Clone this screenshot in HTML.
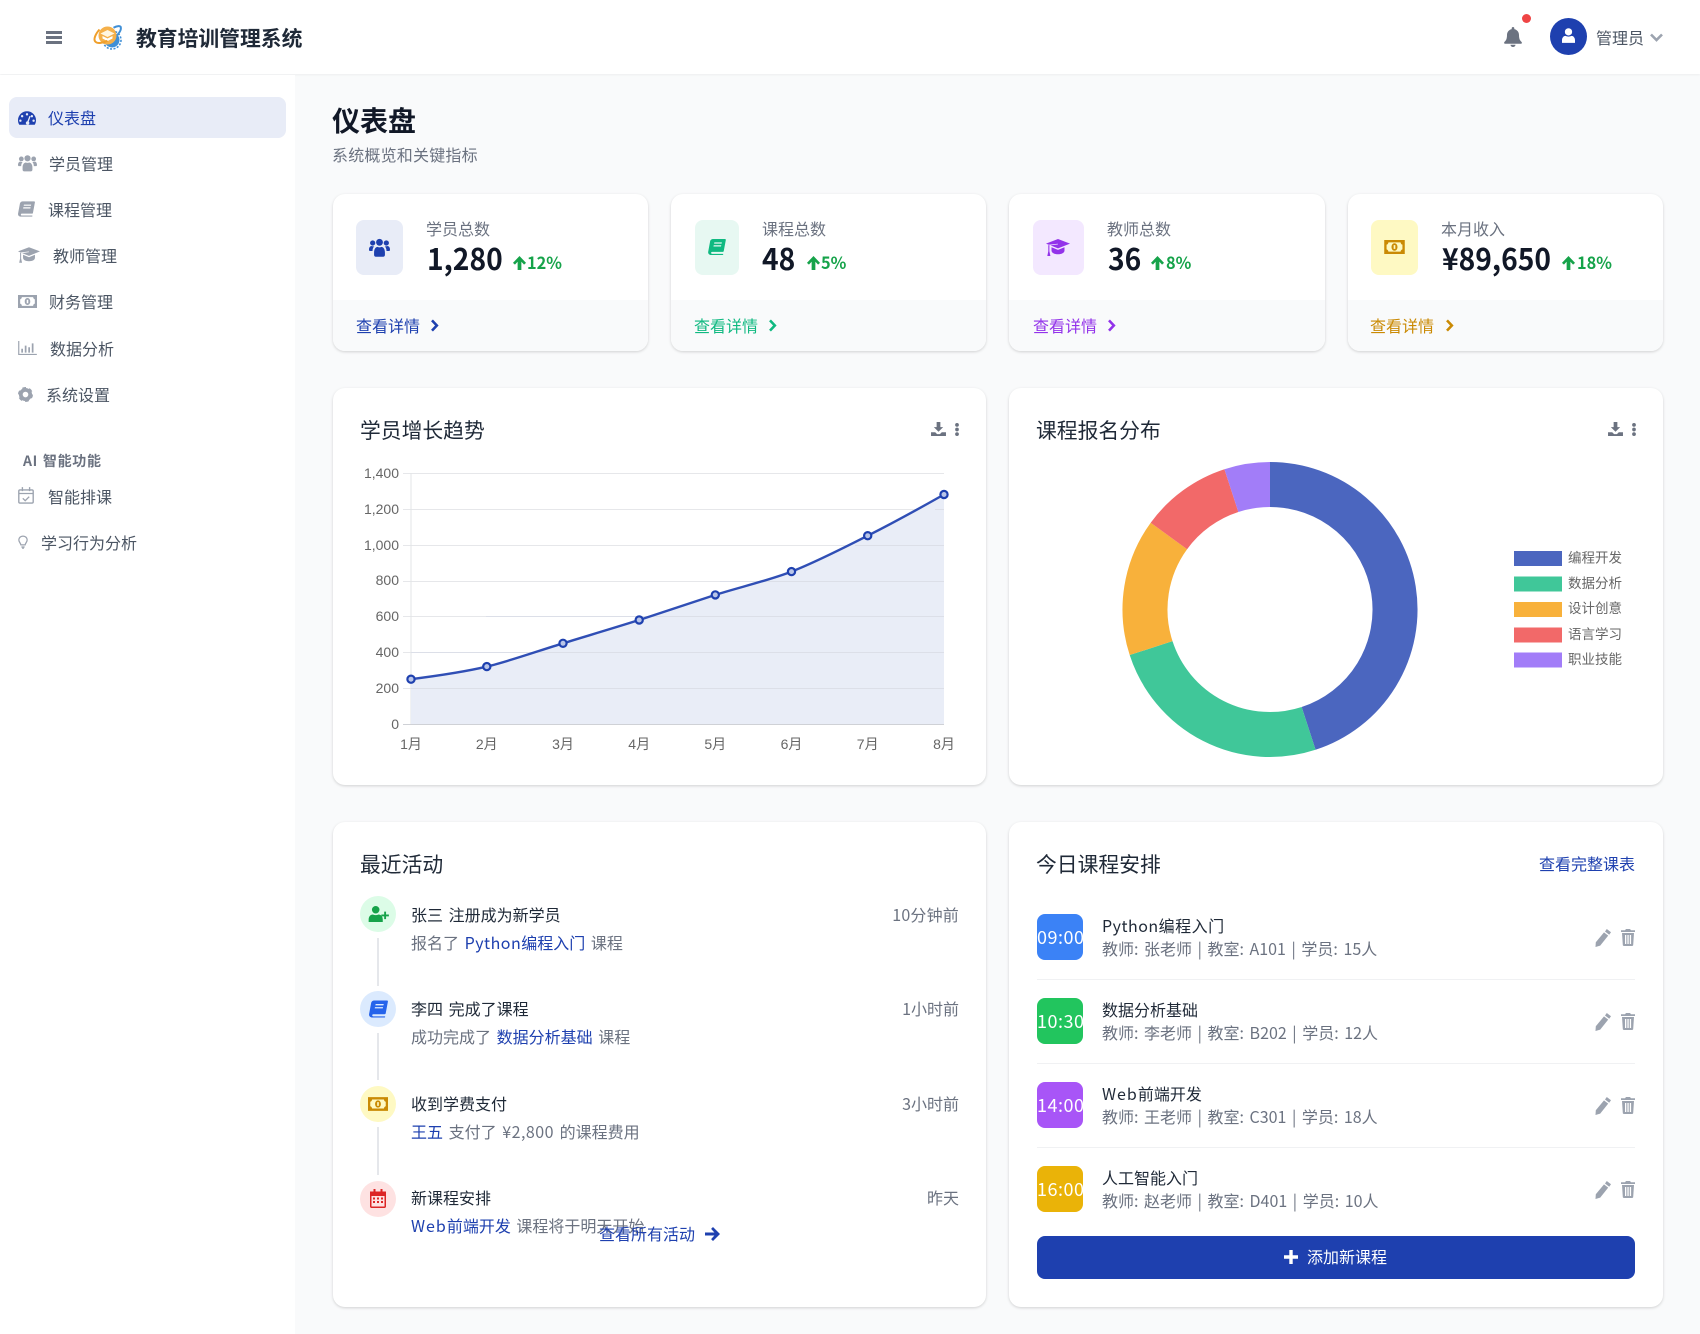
<!DOCTYPE html>
<html lang="zh-CN"><head><meta charset="utf-8"><title>教育培训管理系统</title>
<style>
html,body{margin:0;padding:0;background:#f9fafb}
#p{position:relative;width:1700px;height:1334px;overflow:hidden;background:#f9fafb;font-family:"Noto Sans CJK SC","Liberation Sans",sans-serif;font-size:16px;color:#1f2937;filter:blur(.35px)}
.a{position:absolute}
.t{position:absolute;line-height:24px;white-space:nowrap}
.r{text-align:right}
.w{word-spacing:2px}
.l{letter-spacing:.5px}
.card{position:absolute;background:#fff;border-radius:12px;box-shadow:0 1px 3px rgba(0,0,0,.12),0 1px 2px rgba(0,0,0,.05);overflow:hidden}
.foot{position:absolute;left:0;right:0;top:106px;bottom:0;background:#f9fafb}
.n{color:#4b5563;left:0}
.g{color:#6b7280}
.b{color:#1e40af}
.h{font-size:20.8px;color:#1f2937;line-height:30px;position:absolute;white-space:nowrap}
.num{position:absolute;font-size:30px;font-weight:700;color:#111827;line-height:40px;white-space:nowrap;transform:scaleX(.94);transform-origin:left center}
.up{position:absolute;font-size:17px;font-weight:700;color:#16a34a;line-height:24px;white-space:nowrap;transform:scaleX(.96);transform-origin:left center}
.ic{position:absolute;border-radius:8px}
.tb{position:absolute;left:1037px;width:46px;height:46px;border-radius:8px;color:#fff;font-size:18px;line-height:46px;text-align:center;white-space:nowrap;overflow:hidden;letter-spacing:.5px}
.cx{position:absolute;left:360px;width:36px;height:36px;border-radius:50%}
.ln{position:absolute;left:377px;width:2px;background:#e5e7eb}
.dv{position:absolute;left:1037px;width:598px;height:1px;background:#f0f1f3}
svg{position:absolute;overflow:visible}
</style></head><body><div id="p">
<svg width="0" height="0" style="position:absolute"><defs>
<symbol id="gauge" viewBox="0 0 24 20"><path fill="currentColor" fill-rule="evenodd" d="M12 1A12 12 0 0 0 0 13c0 2.300.6 4.300 1.700 6h20.600c1.100-1.700 1.700-3.700 1.700-6A12 12 0 0 0 12 1zM12 3.500a1.600 1.600 0 1 1 0 3.200 1.600 1.600 0 0 1 0-3.200zM5.500 6a1.600 1.600 0 1 1 0 3.200 1.600 1.600 0 0 1 0-3.200zM18.500 6a1.600 1.600 0 1 1 0 3.200 1.600 1.600 0 0 1 0-3.200zM3.200 12a1.600 1.600 0 1 1 0 3.200 1.600 1.600 0 0 1 0-3.200zM20.800 12a1.600 1.600 0 1 1 0 3.200 1.600 1.600 0 0 1 0-3.200zM15.300 7.200l1.500.6-2.500 7a2.400 2.400 0 1 1-1.800-.5z"/></symbol>
<symbol id="users" viewBox="0 0 24 21"><g fill="currentColor"><circle cx="12" cy="4.600" r="3.900"/><circle cx="4.200" cy="5.300" r="3"/><circle cx="19.800" cy="5.300" r="3"/><path d="M5.800 16c0-4 2.200-6.200 4-6.200 1.400.7 3 .7 4.400 0 1.800 0 4 2.200 4 6.200v3c0 1-.8 2-2 2H7.800c-1.200 0-2-1-2-2z"/><path d="M0 13c0-2.500 1.300-4.200 3-4.200 1 .5 2 .6 3 .3-1.200 1.200-2 3-2 5.400H1.500C.6 14.500 0 14 0 13zM24 13c0-2.500-1.300-4.200-3-4.200-1 .5-2 .6-3 .3 1.200 1.200 2 3 2 5.400h2.500c.9 0 1.500-.5 1.500-1.500z"/></g></symbol>
<symbol id="book" viewBox="0 0 20 18"><path fill="currentColor" fill-rule="evenodd" d="M5.500 0H19c.8 0 1 .6.900 1.200L17.600 13.500c-.1.700-.6 1-1.200 1H4.500c-1.500 0-1.500 2.200 0 2.200h11.900c.5 0 .7.300.6.700-.1.400-.4.600-.8.600H3.500C1.300 18-.3 16.500.1 14.300L2.300 2.400C2.600 1 4 0 5.500 0zM7 3.800l-.3 1.400h8.500l.3-1.400zM6.300 7l-.3 1.400h8.500l.3-1.400z"/></symbol>
<symbol id="cap" viewBox="0 0 24 17"><path fill="currentColor" d="M12 0 24 4.600 12 9.400 4.500 6.400 12 5.400 11.800 4.700 2.800 5.800 0 4.600zM5.500 8.200l6.500 2.700 6.500-2.700v3.300c0 2.400-3 3.800-6.500 3.800s-6.500-1.400-6.500-3.800zM2.300 6.200l1.100-.2v6.300l1 4.700H1.300l1-4.700z"/></symbol>
<symbol id="money" viewBox="0 0 22 15"><path fill="currentColor" fill-rule="evenodd" d="M0 0h22v15H0zM4.500 2.500C4.300 4 3.500 4.800 2.500 5v5c1 .2 1.800 1 2 2.500h13c.2-1.500 1-2.300 2-2.500V5c-1-.2-1.800-1-2-2.500zM11 3.500c1.900 0 3.200 1.800 3.200 4s-1.300 4-3.200 4-3.200-1.800-3.200-4 1.300-4 3.200-4zM10.100 5.500v4h1.800v-4z"/></symbol>
<symbol id="chart" viewBox="0 0 24 18"><path fill="currentColor" d="M0 0h1.500v16.500H24V18H0zM4 10h2.200v5H4zM8.500 6h2.200v9H8.500zM13 8h2.200v7H13zM17.500 3h2.200v12h-2.200z"/></symbol>
<symbol id="cog" viewBox="0 0 24 24"><circle cx="12" cy="12" r="7.500" fill="none" stroke="currentColor" stroke-width="6"/><circle cx="12" cy="12" r="10.300" fill="none" stroke="currentColor" stroke-width="3.400" stroke-dasharray="5.800 5"/></symbol>
<symbol id="calc" viewBox="0 0 20 21"><g fill="none" stroke="currentColor" stroke-width="1.700"><rect x="1" y="3.500" width="18" height="16.500" rx="1.500"/><path d="M1 8h18M5.500 0v5M14.500 0v5M6 14l3 3 5-5"/></g></symbol>
<symbol id="bulb" viewBox="0 0 12 16"><g fill="none" stroke="currentColor" stroke-width="1.500"><path d="M6 1C3 1 1 3 1 5.500c0 2.500 2 3.500 2.500 6h5C9 9 11 8 11 5.500 11 3 9 1 6 1z"/><path d="M4 14h4M5 15.500h2"/></g></symbol>
<symbol id="bell" viewBox="0 0 18 20"><path fill="currentColor" d="M9 0c.8 0 1.300.6 1.300 1.300v.8C13 2.700 15 5 15 8c0 4.500 1.300 5.700 2.600 7 .6.700.2 1.800-.8 1.800H1.200c-1 0-1.400-1.100-.8-1.800C1.700 13.700 3 12.500 3 8c0-3 2-5.300 4.700-5.900v-.8C7.700.6 8.200 0 9 0zM6.500 17.800h5A2.500 2.200 0 0 1 9 20a2.500 2.200 0 0 1-2.500-2.200z"/></symbol>
<symbol id="dl" viewBox="0 0 16 15"><path fill="currentColor" d="M6 0h4v5.500h3L8 10.500 3 5.500h3zM0 11h4.500L6.500 13h3l2-2H16v4H0z"/></symbol>
<symbol id="dots" viewBox="0 0 4 14"><g fill="currentColor"><circle cx="2" cy="2" r="2"/><circle cx="2" cy="7" r="2"/><circle cx="2" cy="12" r="2"/></g></symbol>
<symbol id="up" viewBox="0 0 14 15"><path fill="currentColor" d="M7 0l7 7.400-2.100 1.900L9 6.200V15H5V6.200L2.100 9.300 0 7.400z"/></symbol>
<symbol id="chev" viewBox="0 0 9 14"><path fill="none" stroke="currentColor" stroke-width="2.800" d="M1.800 1.500 7 7l-5.200 5.500"/></symbol>
<symbol id="pen" viewBox="0 0 16 18"><path fill="currentColor" d="M11.800 0l4.200 3.200-1.800 2.500-4.200-3.200zM9 3.400l4.200 3.200-8 10L.5 18l.3-4.700z"/></symbol>
<symbol id="trash" viewBox="0 0 14 17"><path fill="currentColor" fill-rule="evenodd" d="M5 0h4l1 1.200h4V3H0V1.200h4zM1 4h12l-.8 12c0 .6-.6 1-1.200 1H3c-.6 0-1.200-.4-1.200-1zM4 6v9h1.300V6zM6.400 6v9h1.300V6zM8.800 6v9h1.300V6z"/></symbol>
<symbol id="plus" viewBox="0 0 14 14"><path fill="currentColor" d="M5.300 0h3.400v5.300H14v3.400H8.700V14H5.300V8.700H0V5.300h5.300z"/></symbol>
<symbol id="userp" viewBox="0 0 22 17"><g fill="currentColor"><circle cx="7.500" cy="4" r="4"/><path d="M0 17v-2.500C0 11 2 9 4.500 9c2 .9 4 .9 6 0 2.500 0 4.500 2 4.500 5.500V17z"/><path d="M16.500 6h2v3h3v2h-3v3h-2v-3h-3V9h3z"/></g></symbol>
<symbol id="cal" viewBox="0 0 16 19"><path fill="currentColor" fill-rule="evenodd" d="M3.500 0h2v2.500h5V0h2v2.500H16v15c0 .8-.7 1.500-1.500 1.500h-13C.7 19 0 18.300 0 17.500v-15h3.500zM1.500 7v10.500h13V7zM3 8.500h2v2H3zM7 8.500h2v2H7zM11 8.500h2v2h-2zM3 12h2v2H3zM7 12h2v2H7zM11 12h2v2h-2z"/></symbol>
</defs></svg>

<!-- header -->
<div class="a" style="left:0;top:0;width:1700px;height:74px;background:#fff;box-shadow:0 1px 2px rgba(0,0,0,.05)"></div>
<div class="a" style="left:46px;top:31px;width:16px;height:3px;background:#6b7280"></div>
<div class="a" style="left:46px;top:36px;width:16px;height:3px;background:#6b7280"></div>
<div class="a" style="left:46px;top:41px;width:16px;height:3px;background:#6b7280"></div>
<svg style="left:94px;top:25px;width:28px;height:24px" viewBox="0 0 28 24">
<circle cx="18" cy="15" r="7.500" fill="#3f8fd6"/>
<circle cx="18" cy="15" r="9" fill="none" stroke="#3f8fd6" stroke-width="1.600" stroke-dasharray="2 1.500"/>
<circle cx="13.500" cy="10.500" r="9" fill="#f5b04a"/>
<path d="M13.500 5l7 3.500-7 3.500-7-3.500z" fill="#fff6e2"/><path d="M8.500 11l5 2.500 5-2.500v2.500l-5 2.600-5-2.600z" fill="#fff"/>
<path d="M5.500 4.500C1.500 9-1 14.500 1.500 16.800c2.300 2.100 7.500 1.200 12-1" fill="none" stroke="#ef9f2b" stroke-width="2"/>
<path d="M19.500 2.800c3.500-2 6.800-2.300 7.300-.6.500 2-1 5-3.500 7.800" fill="none" stroke="#3f8fd6" stroke-width="2"/>
</svg>
<div class="t" style="left:136px;top:22px;font-size:20.800px;font-weight:700;line-height:30px;color:#1f2937">教育培训管理系统</div>
<svg style="left:1504px;top:27px;width:18px;height:20px;color:#6b7280"><use href="#bell"/></svg>
<div class="a" style="left:1522px;top:14px;width:9px;height:9px;border-radius:50%;background:#ef4444"></div>
<div class="a" style="left:1550px;top:18px;width:37px;height:37px;border-radius:50%;background:#1e40af"></div>
<svg style="left:1562px;top:27px;width:13px;height:17px" viewBox="0 0 15 17"><circle cx="7.500" cy="4.300" r="4.200" fill="#fff"/><path d="M0 17v-3c0-3 2-5 4-5 2.200 1 4.800 1 7 0 2 0 4 2 4 5v3z" fill="#fff"/></svg>
<div class="t" style="left:1596px;top:24.500px;color:#4b5563">管理员</div>
<svg style="left:1650px;top:33px;width:13px;height:9px;color:#9ca3af" viewBox="0 0 13 9"><path fill="none" stroke="currentColor" stroke-width="2.600" d="M1 1.500l5.500 5.500L12 1.500"/></svg>

<!-- sidebar -->
<div class="a" style="left:0;top:75px;width:295px;height:1259px;background:#fff"></div>
<div class="a" style="left:9px;top:97px;width:277px;height:41px;border-radius:8px;background:#e8ecf7"></div>
<svg style="left:18px;top:110px;width:18px;height:16px;color:#1e40af"><use href="#gauge"/></svg>
<div class="t b" style="left:48px;top:105px">仪表盘</div>
<svg style="left:18px;top:154px;width:19px;height:18px;color:#9ca3af"><use href="#users"/></svg>
<div class="t n" style="left:49px;top:151px">学员管理</div>
<svg style="left:18px;top:201px;width:17px;height:16px;color:#9ca3af"><use href="#book"/></svg>
<div class="t n" style="left:48px;top:197px">课程管理</div>
<svg style="left:18px;top:247px;width:22px;height:16px;color:#9ca3af"><use href="#cap"/></svg>
<div class="t n" style="left:53px;top:243px">教师管理</div>
<svg style="left:18px;top:295px;width:19px;height:13px;color:#9ca3af"><use href="#money"/></svg>
<div class="t n" style="left:49px;top:289px">财务管理</div>
<svg style="left:18px;top:341px;width:19px;height:14px;color:#9ca3af"><use href="#chart"/></svg>
<div class="t n" style="left:50px;top:336px">数据分析</div>
<svg style="left:18px;top:387px;width:15px;height:15px;color:#9ca3af"><use href="#cog"/></svg>
<div class="t n" style="left:46px;top:382px">系统设置</div>
<div class="t" style="left:23px;top:449px;font-size:14px;font-weight:700;color:#6b7280;line-height:24px;letter-spacing:.7px;word-spacing:1px">AI 智能功能</div>
<svg style="left:18px;top:487px;width:16px;height:17px;color:#9ca3af"><use href="#calc"/></svg>
<div class="t n" style="left:48px;top:484px">智能排课</div>
<svg style="left:18px;top:535px;width:10px;height:14px;color:#9ca3af"><use href="#bulb"/></svg>
<div class="t n" style="left:41px;top:530px">学习行为分析</div>

<!-- page title -->
<div class="t" style="left:332px;top:100px;font-size:28px;font-weight:700;line-height:40px;color:#111827">仪表盘</div>
<div class="t g" style="left:332px;top:142px;letter-spacing:.2px">系统概览和关键指标</div>

<!-- stat cards -->
<div class="card" style="left:333px;top:194px;width:315px;height:157px"><div class="foot"></div></div>
<div class="card" style="left:671px;top:194px;width:315px;height:157px"><div class="foot"></div></div>
<div class="card" style="left:1009px;top:194px;width:316px;height:157px"><div class="foot"></div></div>
<div class="card" style="left:1348px;top:194px;width:315px;height:157px"><div class="foot"></div></div>

<div class="ic" style="left:356px;top:220px;width:47px;height:55px;background:#e8ecf7"></div>
<svg style="left:369px;top:238px;width:21px;height:19px;color:#1e40af"><use href="#users"/></svg>
<div class="t g" style="left:426px;top:216px">学员总数</div>
<div class="num" style="left:427px;top:237px">1,280</div>
<svg style="left:512px;top:256px;width:15px;height:14px;color:#16a34a"><use href="#up"/></svg>
<div class="up" style="left:527px;top:250px">12%</div>
<div class="t b" style="left:356px;top:313px">查看详情</div>
<svg style="left:430px;top:319px;width:9px;height:13px;color:#1e40af"><use href="#chev"/></svg>

<div class="ic" style="left:695px;top:220px;width:44px;height:55px;background:#e7f8f2"></div>
<svg style="left:708px;top:239px;width:18px;height:16px;color:#10b981"><use href="#book"/></svg>
<div class="t g" style="left:762px;top:216px">课程总数</div>
<div class="num" style="left:762px;top:237px">48</div>
<svg style="left:806px;top:256px;width:15px;height:14px;color:#16a34a"><use href="#up"/></svg>
<div class="up" style="left:821px;top:250px">5%</div>
<div class="t" style="left:694px;top:313px;color:#10b981">查看详情</div>
<svg style="left:768px;top:319px;width:9px;height:13px;color:#10b981"><use href="#chev"/></svg>

<div class="ic" style="left:1033px;top:220px;width:51px;height:55px;background:#f3e8ff"></div>
<svg style="left:1046px;top:239px;width:24px;height:17px;color:#9333ea"><use href="#cap"/></svg>
<div class="t g" style="left:1107px;top:216px">教师总数</div>
<div class="num" style="left:1108px;top:237px">36</div>
<svg style="left:1150px;top:256px;width:15px;height:14px;color:#16a34a"><use href="#up"/></svg>
<div class="up" style="left:1166px;top:250px">8%</div>
<div class="t" style="left:1033px;top:313px;color:#9333ea">查看详情</div>
<svg style="left:1107px;top:319px;width:9px;height:13px;color:#9333ea"><use href="#chev"/></svg>

<div class="ic" style="left:1371px;top:220px;width:47px;height:55px;background:#fef9c3"></div>
<svg style="left:1384px;top:240px;width:21px;height:14px;color:#ca8a04"><use href="#money"/></svg>
<div class="t g" style="left:1441px;top:216px">本月收入</div>
<div class="num" style="left:1442px;top:237px">¥89,650</div>
<svg style="left:1561px;top:256px;width:15px;height:14px;color:#16a34a"><use href="#up"/></svg>
<div class="up" style="left:1577px;top:250px">18%</div>
<div class="t" style="left:1370px;top:313px;color:#ca8a04">查看详情</div>
<svg style="left:1445px;top:319px;width:9px;height:13px;color:#ca8a04"><use href="#chev"/></svg>

<!-- charts -->
<div class="card" style="left:333px;top:388px;width:653px;height:397px"></div>
<div class="card" style="left:1009px;top:388px;width:654px;height:397px"></div>
<div class="h" style="left:360px;top:414px">学员增长趋势</div>
<svg style="left:931px;top:422px;width:15px;height:14px;color:#6b7280"><use href="#dl"/></svg>
<svg style="left:955px;top:423px;width:4px;height:13px;color:#6b7280"><use href="#dots"/></svg>
<div class="h" style="left:1036px;top:414px">课程报名分布</div>
<svg style="left:1608px;top:422px;width:15px;height:14px;color:#6b7280"><use href="#dl"/></svg>
<svg style="left:1632px;top:423px;width:4px;height:13px;color:#6b7280"><use href="#dots"/></svg>

<svg style="left:0;top:0;width:1700px;height:1334px" viewBox="0 0 1700 1334">
<g stroke="#e6e7ea" stroke-width="1">
<path d="M403 473.500H944M403 509.500H944M403 545.500H944M403 581.500H944M403 616.500H944M403 652.500H944M403 688.500H944"/>
<path d="M411 473V724" stroke="#e3e4e7"/>
</g>
<path d="M403 724.500H944" stroke="#cfd1d6" stroke-width="1"/>
<path fill="#e8ecf7" d="M411 679.200C426 677.300 464 672 486.800 666.600C509.500 661.200 540 650.300 563 643.300C585.800 636.300 616.300 627.300 639.200 620C662 612.700 692.400 602.200 715.300 594.900C738.200 587.600 768.600 580.500 791.500 571.600C814.400 562.700 844.900 547.300 867.700 535.700C890.600 524.100 929 503 944 494.500V724H411Z" fill-opacity=".97"/>
<g stroke="#dcdfe8" stroke-width="1"><path d="M411 688.500H944M411 652.500H944M486 616.500H944M720 581.500H944M855 545.500H944M935 509.500H944"/></g>
<path fill="none" stroke="#1e40af" stroke-width="2.400" stroke-opacity=".92" d="M411 679.200C426 677.300 464 672 486.800 666.600C509.500 661.200 540 650.300 563 643.300C585.800 636.300 616.300 627.300 639.200 620C662 612.700 692.400 602.200 715.300 594.900C738.200 587.600 768.600 580.500 791.500 571.600C814.400 562.700 844.900 547.300 867.700 535.700C890.600 524.100 929 503 944 494.500"/>
<g fill="#b9c5e8" stroke="#1e40af" stroke-width="2.200">
<circle cx="411" cy="679.200" r="3.600"/><circle cx="486.800" cy="666.600" r="3.600"/><circle cx="563" cy="643.300" r="3.600"/><circle cx="639.200" cy="620" r="3.600"/><circle cx="715.300" cy="594.900" r="3.600"/><circle cx="791.500" cy="571.600" r="3.600"/><circle cx="867.700" cy="535.700" r="3.600"/><circle cx="944" cy="494.500" r="3.600"/>
</g>
<g font-family="'Liberation Sans','Noto Sans CJK SC',sans-serif" font-size="14" fill="#666" text-anchor="end">
<text x="399" y="478">1,400</text><text x="399" y="514">1,200</text><text x="399" y="550">1,000</text><text x="399" y="585">800</text><text x="399" y="621">600</text><text x="399" y="657">400</text><text x="399" y="693">200</text><text x="399" y="729">0</text>
</g>
<g font-family="'Liberation Sans','Noto Sans CJK SC',sans-serif" font-size="14" fill="#666" text-anchor="middle">
<text x="411" y="749">1月</text><text x="486.800" y="749">2月</text><text x="563" y="749">3月</text><text x="639.200" y="749">4月</text><text x="715.300" y="749">5月</text><text x="791.500" y="749">6月</text><text x="867.700" y="749">7月</text><text x="944" y="749">8月</text>
</g>
<g fill="none" stroke-width="45">
<path stroke="#4b66bf" d="M1270 484.500A125 125 0 0 1 1308.600 728.400"/>
<path stroke="#40c799" d="M1308.600 728.400A125 125 0 0 1 1151.100 648.100"/>
<path stroke="#f8b13b" d="M1151.100 648.100A125 125 0 0 1 1168.900 536"/>
<path stroke="#f26969" d="M1168.900 536A125 125 0 0 1 1231.400 490.600"/>
<path stroke="#a27df8" d="M1231.400 490.600A125 125 0 0 1 1270 484.500"/>
</g>
<rect x="1514" y="551" width="48" height="15" fill="#4b66bf"/>
<rect x="1514" y="576.500" width="48" height="15" fill="#40c799"/>
<rect x="1514" y="602" width="48" height="15" fill="#f8b13b"/>
<rect x="1514" y="627.500" width="48" height="15" fill="#f26969"/>
<rect x="1514" y="652.500" width="48" height="15" fill="#a27df8"/>
<g font-family="'Noto Sans CJK SC','Liberation Sans',sans-serif" font-size="13.500" fill="#666">
<text x="1568" y="562.500">编程开发</text><text x="1568" y="588">数据分析</text><text x="1568" y="613">设计创意</text><text x="1568" y="639">语言学习</text><text x="1568" y="664">职业技能</text>
</g>
</svg>

<!-- activity -->
<div class="card" style="left:333px;top:822px;width:653px;height:485px"></div>
<div class="h" style="left:360px;top:847.500px">最近活动</div>
<div class="ln" style="top:938px;height:48px"></div>
<div class="ln" style="top:1033px;height:47px"></div>
<div class="ln" style="top:1127px;height:48px"></div>
<div class="cx" style="top:896px;background:#dcfce7"></div>
<svg style="left:368px;top:906px;width:22px;height:16px;color:#16a34a"><use href="#userp"/></svg>
<div class="t w" style="left:411px;top:902px;color:#1f2937">张三 注册成为新学员</div>
<div class="t g w" style="left:411px;top:930px">报名了 <span class="b l">Python</span><span class="b">编程入门</span> 课程</div>
<div class="t g r" style="right:741px;top:902px;letter-spacing:.2px">10分钟前</div>
<div class="cx" style="top:991px;background:#dbeafe"></div>
<svg style="left:369px;top:1000px;width:19px;height:18px;color:#2563eb"><use href="#book"/></svg>
<div class="t w" style="left:411px;top:996px;color:#1f2937">李四 完成了课程</div>
<div class="t g w" style="left:411px;top:1024px">成功完成了 <span class="b">数据分析基础</span> 课程</div>
<div class="t g r" style="right:741px;top:996px">1小时前</div>
<div class="cx" style="top:1086px;background:#fef9c3"></div>
<svg style="left:368px;top:1097px;width:20px;height:14px;color:#ca8a04"><use href="#money"/></svg>
<div class="t" style="left:411px;top:1091px;color:#1f2937">收到学费支付</div>
<div class="t g w" style="left:411px;top:1119px"><span class="b">王五</span> 支付了 <span class="l">¥2,800</span> 的课程费用</div>
<div class="t g r" style="right:741px;top:1091px">3小时前</div>
<div class="cx" style="top:1181px;background:#fee2e2"></div>
<svg style="left:370px;top:1189px;width:16px;height:19px;color:#dc2626"><use href="#cal"/></svg>
<div class="t" style="left:411px;top:1185px;color:#1f2937">新课程安排</div>
<div class="t g w" style="left:411px;top:1213px"><span class="b" style="letter-spacing:1px">Web</span><span class="b">前端开发</span> 课程将于明天开始</div>
<div class="t g r" style="right:741px;top:1185px">昨天</div>
<div class="t b" style="left:599px;top:1221px">查看所有活动</div>
<svg style="left:705px;top:1227px;width:15px;height:14px;color:#1e40af" viewBox="0 0 15 14"><path fill="currentColor" d="M8 0l7 7-7 7-1.900-1.900L9.400 8.500H0v-3h9.400L6.100 1.900z"/></svg>

<!-- schedule -->
<div class="card" style="left:1009px;top:822px;width:654px;height:485px"></div>
<div class="h" style="left:1036px;top:847.500px">今日课程安排</div>
<div class="t b r" style="right:65px;top:851px">查看完整课表</div>

<div class="tb" style="top:914px;background:#3b82f6">09:00</div>
<div class="t l" style="left:1102px;top:912.500px;color:#1f2937">Python编程入门</div>
<div class="t g w" style="left:1102px;top:936px">教师: 张老师 | 教室: A101 | 学员: 15人</div>
<svg style="left:1595px;top:929px;width:16px;height:18px;color:#9ca3af"><use href="#pen"/></svg>
<svg style="left:1621px;top:929px;width:14px;height:17px;color:#9ca3af"><use href="#trash"/></svg>
<div class="dv" style="top:979px"></div>

<div class="tb" style="top:998px;background:#22c55e">10:30</div>
<div class="t" style="left:1102px;top:996.500px;color:#1f2937">数据分析基础</div>
<div class="t g w" style="left:1102px;top:1020px">教师: 李老师 | 教室: B202 | 学员: 12人</div>
<svg style="left:1595px;top:1013px;width:16px;height:18px;color:#9ca3af"><use href="#pen"/></svg>
<svg style="left:1621px;top:1013px;width:14px;height:17px;color:#9ca3af"><use href="#trash"/></svg>
<div class="dv" style="top:1063px"></div>

<div class="tb" style="top:1082px;background:#a855f7">14:00</div>
<div class="t" style="left:1102px;top:1080.500px;color:#1f2937"><span style="letter-spacing:1px">Web</span>前端开发</div>
<div class="t g w" style="left:1102px;top:1104px">教师: 王老师 | 教室: C301 | 学员: 18人</div>
<svg style="left:1595px;top:1097px;width:16px;height:18px;color:#9ca3af"><use href="#pen"/></svg>
<svg style="left:1621px;top:1097px;width:14px;height:17px;color:#9ca3af"><use href="#trash"/></svg>
<div class="dv" style="top:1147px"></div>

<div class="tb" style="top:1166px;background:#eab308">16:00</div>
<div class="t" style="left:1102px;top:1164.500px;color:#1f2937">人工智能入门</div>
<div class="t g w" style="left:1102px;top:1188px">教师: 赵老师 | 教室: D401 | 学员: 10人</div>
<svg style="left:1595px;top:1181px;width:16px;height:18px;color:#9ca3af"><use href="#pen"/></svg>
<svg style="left:1621px;top:1181px;width:14px;height:17px;color:#9ca3af"><use href="#trash"/></svg>

<div class="a" style="left:1037px;top:1236px;width:598px;height:43px;border-radius:8px;background:#1e40af"></div>
<svg style="left:1284px;top:1250px;width:14px;height:14px;color:#fff"><use href="#plus"/></svg>
<div class="t" style="left:1307px;top:1244px;color:#fff">添加新课程</div>
</div></body></html>
